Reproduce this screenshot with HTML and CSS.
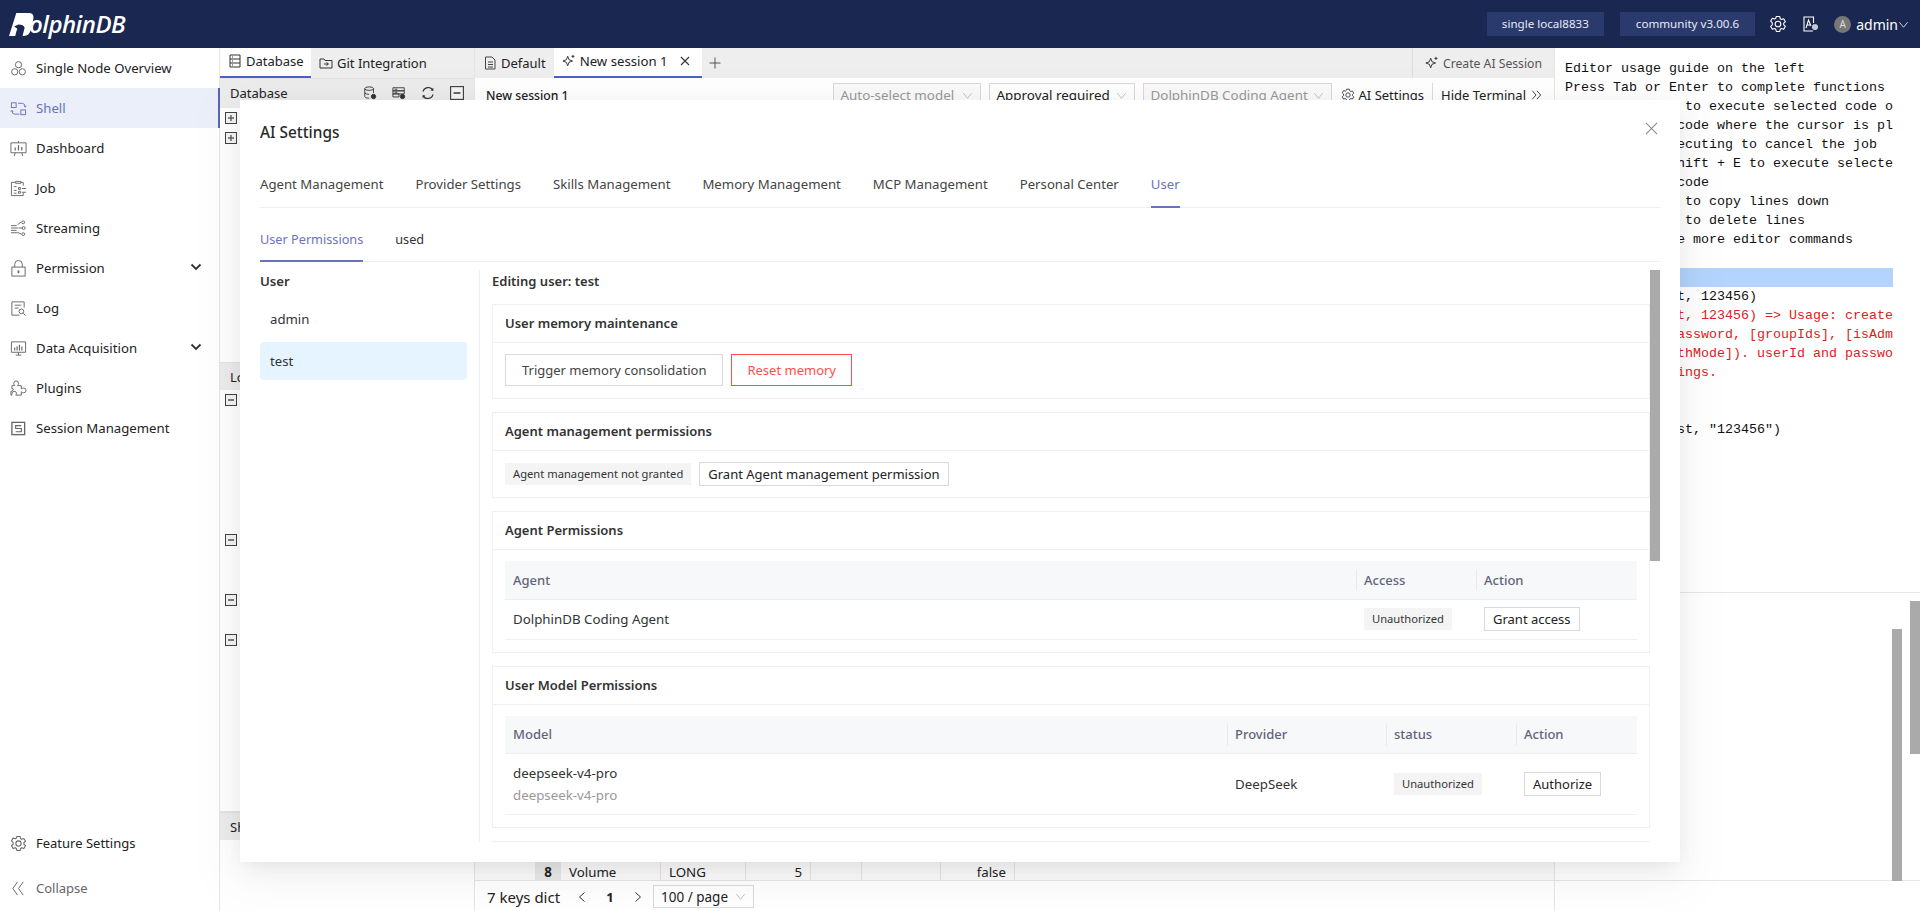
FILE: index.html
```html
<!DOCTYPE html>
<html lang="en">
<head>
<meta charset="utf-8">
<title>DolphinDB Shell</title>
<link rel="stylesheet" href="styles.css">
</head>
<body>
<svg class="defs" aria-hidden="true">
  <symbol id="gear" viewBox="0 0 18 18"><path d="M7.3 1.5h3.4l.5 2.2 1.3.8 2.2-.7 1.7 2.9-1.7 1.5v1.6l1.7 1.5-1.7 2.9-2.2-.7-1.3.8-.5 2.2H7.3l-.5-2.2-1.3-.8-2.2.7-1.7-2.9 1.7-1.5V7.7L1.6 6.2l1.7-2.9 2.2.7 1.3-.8z" fill="none" stroke="currentColor" stroke-width="1.1" stroke-linejoin="round"/><circle cx="9" cy="9" r="2.8" fill="none" stroke="currentColor" stroke-width="1.1"/></symbol>
  <symbol id="spark" viewBox="0 0 16 16"><path d="M6.5 2.5 8 6.5l4 1.5-4 1.5-1.500 4-1.500-4L1 8l4-1.500z" fill="none" stroke="currentColor" stroke-width="1.1" stroke-linejoin="round"/><path d="M12.500 1v3.500M10.800 2.700h3.400" stroke="currentColor" stroke-width="1.100"/></symbol>
  <symbol id="chev" viewBox="0 0 12 12"><path d="M1.500 3.500 6 9l4.500-5.500" fill="none" stroke="currentColor" stroke-width="1"/></symbol>
  <symbol id="plus" viewBox="0 0 12 12"><rect x=".5" y=".5" width="11" height="11" fill="#f4f4f4" stroke="#444"/><path d="M3 6h6M6 3v6" stroke="#666" stroke-width="1.500"/></symbol>
  <symbol id="minus" viewBox="0 0 12 12"><rect x=".5" y=".5" width="11" height="11" fill="#f4f4f4" stroke="#444"/><path d="M3 6h6" stroke="#555" stroke-width="1.500"/></symbol>
</svg>
<div class="app">
  <header class="topbar">
    <div class="logo">
      <svg class="logo-d" viewBox="0 0 24 24"><path d="M7 1h12q5 0 4.500 5L21 17q-1.500 6-7 6h-1l2-8q-1-3-6-3L5 14l3 2-1 3-1 4H0z" fill="#fff"/></svg>
      <span class="logo-text">olphinDB</span>
    </div>
    <div class="top-right">
      <span class="badge badge-first">single local8833</span>
      <span class="badge badge-last">community v3.00.6</span>
      <svg class="top-icon"><use href="#gear"/></svg>
      <svg class="top-icon" viewBox="0 0 18 18"><path d="M12 16H3V2h9.500v6M5 13l2.500-8 2.500 6M5.800 10h3.800" fill="none" stroke="currentColor" stroke-width="1.100"/><path d="M11 12h6M14 9.500v5.500M12 10h4v4h-4z" fill="none" stroke="currentColor"/></svg>
      <span class="avatar">A</span>
      <span class="user">admin</span>
      <svg class="user-chev"><use href="#chev"/></svg>
    </div>
  </header>
  <div class="main">
    <nav class="sidebar">
      <a class="nav-item"><svg class="nav-icon" viewBox="0 0 18 18"><g fill="none" stroke="currentColor"><circle cx="9" cy="5" r="3.300"/><circle cx="5" cy="12.500" r="3.300"/><circle cx="13" cy="12.500" r="3.300"/></g></svg>Single Node Overview</a>
      <a class="nav-item nav-active"><svg class="nav-icon" viewBox="0 0 18 18"><g fill="none" stroke="currentColor"><rect x="1.500" y="3" width="5" height="5"/><rect x="11.500" y="10.500" width="5" height="5"/><path d="M8.500 3.500h4.500q3 0 3 4M10 15H5q-3 0-3-4M15 6l1 1.500L17.500 6M.8 12.500 2 11l1.500 1.500"/></g></svg>Shell</a>
      <a class="nav-item"><svg class="nav-icon" viewBox="0 0 18 18"><g fill="none" stroke="currentColor"><path d="M1 3h16v10.500H1zM9 1v2M5.500 13.500 4.500 17M12.500 13.500l1 3.500"/><path d="M5.500 11V8M9 11V5.500M12.500 11V7.500" stroke-width="1.300"/></g></svg>Dashboard</a>
      <a class="nav-item"><svg class="nav-icon" viewBox="0 0 18 18"><g fill="none" stroke="currentColor"><path d="M6 2.500H1.500v14H14v-3M14 6V2.500h-2.500M6 1.500h5.500v2H6zM4 7h3M4 11h3M4 14h3"/><path d="M9 8h2v2H9zM9 12h2v2H9zM12.500 9H17M12.500 13H17"/></g></svg>Job</a>
      <a class="nav-item"><svg class="nav-icon" viewBox="0 0 18 18"><g fill="none" stroke="currentColor"><path d="M1 6h6M1 8.500h8M1 11h6M1 13.500h7M8 5l4-3M9.500 8.500H13M8 13l4 2"/><circle cx="14" cy="2.500" r="1.500"/><circle cx="14.500" cy="8.500" r="1.500"/><circle cx="14" cy="15" r="1.500"/></g></svg>Streaming</a>
      <a class="nav-item nav-sub"><svg class="nav-icon" viewBox="0 0 18 18"><g fill="none" stroke="currentColor"><rect x="2" y="7.500" width="14" height="9.500"/><path d="M5 7.500V4.500a4 4 0 0 1 8 0v3"/><path d="M9 11v3" stroke-width="1.800"/></g></svg><span class="nav-label">Permission</span><svg class="nav-caret" viewBox="0 0 12 12"><path d="M1.500 3.500 6 8l4.500-4.500" fill="none" stroke="currentColor" stroke-width="1.800"/></svg></a>
      <a class="nav-item"><svg class="nav-icon" viewBox="0 0 18 18"><g fill="none" stroke="currentColor"><path d="M15 8V2H2v14h8M5 5.500h7M5 8.500h4"/><circle cx="12" cy="12" r="2.500"/><path d="m14 14 2.500 2.500"/></g></svg>Log</a>
      <a class="nav-item nav-sub"><svg class="nav-icon" viewBox="0 0 18 18"><g fill="none" stroke="currentColor"><path d="M1.500 2h15v11h-15zM6 16h6M9 13v3"/><path d="M5 11V8M7.500 11V6.500M10 11V5M12.500 11V7" stroke-width="1.200"/></g></svg><span class="nav-label">Data Acquisition</span><svg class="nav-caret" viewBox="0 0 12 12"><path d="M1.500 3.500 6 8l4.500-4.500" fill="none" stroke="currentColor" stroke-width="1.800"/></svg></a>
      <a class="nav-item"><svg class="nav-icon" viewBox="0 0 18 18"><path d="M2 6h3q-1-1-1-2.500a2.500 2.500 0 0 1 5 0Q9 5 8 6h4v3.500q1-1 2.500-1a2.500 2.500 0 0 1 0 5q-1.500 0-2.500-1V16H6q1-1 1-1.500a2.500 2.500 0 0 0-5 0V16H1v-4q2 0 2.500-1.500T2 9z" fill="none" stroke="currentColor"/></svg>Plugins</a>
      <a class="nav-item"><svg class="nav-icon" viewBox="0 0 18 18"><rect x="2" y="2.500" width="13.500" height="13" fill="none" stroke="currentColor" stroke-width="1.400"/><path d="M12 6H6v3h6v3.500H6" fill="none" stroke="currentColor" stroke-width="1.200"/></svg>Session Management</a>
      <div class="nav-spacer"></div>
      <a class="nav-item nav-foot"><svg class="nav-icon"><use href="#gear"/></svg>Feature Settings</a>
      <a class="nav-collapse"><svg class="nav-icon" viewBox="0 0 18 18"><path d="M8 2 3 9l5 7M14 2 9 9l5 7" fill="none" stroke="currentColor"/></svg>Collapse</a>
    </nav>
    <section class="leftpanel">
      <div class="tabbar">
        <span class="ptab ptab-on"><svg class="tab-icon" viewBox="0 0 14 14"><path d="M2 1h10v12H2zM2 5h10M2 9h10M4 3h1M4 7h1M4 11h1" fill="none" stroke="#333"/></svg>Database</span>
        <span class="ptab"><svg class="tab-icon" viewBox="0 0 14 14"><path d="M1 3h4l1 1.500h7V12H1zM5 8h4M7.500 6.500 9.500 8l-2 1.500" fill="none" stroke="#333"/></svg>Git Integration</span>
      </div>
      <div class="phead phead-top">
        <span class="phead-label">Database</span>
        <svg class="ph-icon" viewBox="0 0 16 16"><g fill="none" stroke="#333"><ellipse cx="7" cy="3" rx="5" ry="2"/><path d="M2 3v9q0 2 5 2M12 3v5M2 7.500q0 2 5 2"/><circle cx="12" cy="12" r="2.500" fill="#333"/></g></svg>
        <svg class="ph-icon" viewBox="0 0 16 16"><g fill="none" stroke="#333"><path d="M1 2h13v3.500H1zM1 5.500h13V9H1zM1 9h7v3.500H1zM3 3.700h3M3 7.200h3"/><circle cx="12" cy="12" r="2.500" fill="#333"/></g></svg>
        <svg class="ph-icon" viewBox="0 0 16 16"><path d="M13.500 5A6 6 0 0 0 2.300 6.500M2.500 11A6 6 0 0 0 13.700 9.500" fill="none" stroke="#333" stroke-width="1.300"/><path d="m14 2 .2 3.500-3.200-.3zM2 14l-.2-3.500 3.200.3z" fill="#333"/></svg>
        <svg class="ph-icon"><use href="#minus"/></svg>
      </div>
      <div class="pane pane-a">
        <svg class="tree-box"><use href="#plus"/></svg>
        <svg class="tree-box"><use href="#plus"/></svg>
      </div>
      <div class="phead"><span class="phead-label">Local Variables</span></div>
      <div class="pane pane-b">
        <svg class="tree-box"><use href="#minus"/></svg>
        <svg class="tree-box gap-a"><use href="#minus"/></svg>
        <svg class="tree-box gap-b"><use href="#minus"/></svg>
        <svg class="tree-box gap-c"><use href="#minus"/></svg>
      </div>
      <div class="phead"><span class="phead-label">Shared Variables</span></div>
    </section>
    <section class="center">
      <div class="tabbar">
        <span class="etab"><svg class="tab-icon" viewBox="0 0 14 14"><path d="M2.500 1H9l3 3v9H2.500zM5 6h5M5 8.500h5M5 11h5" fill="none" stroke="#444"/></svg>Default</span>
        <span class="etab etab-on"><svg class="tab-icon"><use href="#spark"/></svg>New session 1<svg class="tab-close" viewBox="0 0 12 12"><path d="m2 2 8 8M10 2l-8 8" stroke="#333" stroke-width="1.100"/></svg></span>
        <svg class="tab-add" viewBox="0 0 12 12"><path d="M6 .5v11M.5 6h11" stroke="#555"/></svg>
        <span class="create-ai"><svg class="tab-icon"><use href="#spark"/></svg>Create AI Session</span>
      </div>
      <div class="toolbar">
        <span class="session-name">New session 1</span>
        <span class="select select-off select-a">Auto-select model<svg class="sel-chev"><use href="#chev"/></svg></span>
        <span class="select select-b">Approval required<svg class="sel-chev"><use href="#chev"/></svg></span>
        <span class="select select-off select-c">DolphinDB Coding Agent<svg class="sel-chev"><use href="#chev"/></svg></span>
        <span class="tool-link"><svg class="tab-icon"><use href="#gear"/></svg>AI Settings</span>
        <span class="tool-link tool-sep">Hide Terminal<svg class="dbl" viewBox="0 0 12 12"><path d="m1.500 1.500 4 4.500-4 4.500M6.500 1.500l4 4.500-4 4.500" fill="none" stroke="#333"/></svg></span>
      </div>
      <div class="center-fill"></div>
      <div class="dt-row">
        <span class="dt-idx">8</span>
        <span class="dt-cell dt-name">Volume</span>
        <span class="dt-cell dt-type">LONG</span>
        <span class="dt-cell dt-num">5</span>
        <span class="dt-cell dt-e1"></span>
        <span class="dt-cell dt-e2"></span>
        <span class="dt-cell dt-bool">false</span>
      </div>
      <div class="pager">
        <span class="pager-label">7 keys dict</span>
        <svg class="pager-arrow" viewBox="0 0 10 12"><path d="M7.500 1.500 2.500 6l5 4.500" fill="none" stroke="#333"/></svg>
        <b class="pager-num">1</b>
        <svg class="pager-arrow" viewBox="0 0 10 12"><path d="m2.500 1.500 5 4.500-5 4.500" fill="none" stroke="#333"/></svg>
        <span class="select pager-size">100 / page<svg class="sel-chev"><use href="#chev"/></svg></span>
      </div>
    </section>
    <aside class="terminal">
      <pre class="term-out">Editor usage guide on the left
Press Tab or Enter to complete functions
               to execute selected code o
              code where the cursor is pl
              ecuting to cancel the job
              hift + E to execute selecte
              code
               to copy lines down
               to delete lines
              e more editor commands

<span class="term-sel"> </span>
              t, 123456)
<span class="term-err">              t, 123456) =&gt; Usage: create
              assword, [groupIds], [isAdm
              thMode]). userId and passwo
              ings.</span>


              st, "123456")</pre>
      <div class="term-lower">
        <span class="bar bar-a"></span>
        <span class="bar bar-b"></span>
      </div>
      <div class="term-foot"></div>
    </aside>
  </div>
</div>

<div class="modal">
  <h2 class="modal-title">AI Settings</h2>
  <svg class="modal-close" viewBox="0 0 14 14"><path d="m1 1 12 12M13 1 1 13" stroke="#888" stroke-width="1.100"/></svg>
  <div class="mtabs">
    <span class="mtab">Agent Management</span>
    <span class="mtab">Provider Settings</span>
    <span class="mtab">Skills Management</span>
    <span class="mtab">Memory Management</span>
    <span class="mtab">MCP Management</span>
    <span class="mtab">Personal Center</span>
    <span class="mtab mtab-on">User</span>
  </div>
  <div class="stabs">
    <span class="stab stab-on">User Permissions</span>
    <span class="stab">used</span>
  </div>
  <div class="mbody">
    <div class="users">
      <div class="users-title">User</div>
      <div class="user-row">admin</div>
      <div class="user-row user-on">test</div>
    </div>
    <div class="editor">
      <div class="editor-scroll">
        <div class="editor-title">Editing user: test</div>
        <div class="card">
          <div class="card-head">User memory maintenance</div>
          <div class="card-body body-row">
            <button class="btn btn-lg">Trigger memory consolidation</button>
            <button class="btn btn-lg btn-danger">Reset memory</button>
          </div>
        </div>
        <div class="card">
          <div class="card-head">Agent management permissions</div>
          <div class="card-body body-row body-small">
            <span class="tag">Agent management not granted</span>
            <button class="btn">Grant Agent management permission</button>
          </div>
        </div>
        <div class="card">
          <div class="card-head">Agent Permissions</div>
          <div class="card-body">
            <table class="tbl tbl-agent">
              <thead><tr><th class="c-agent">Agent</th><th class="c-access">Access</th><th class="c-action-a">Action</th></tr></thead>
              <tbody><tr class="row-a"><td>DolphinDB Coding Agent</td><td><span class="tag">Unauthorized</span></td><td><button class="btn">Grant access</button></td></tr></tbody>
            </table>
          </div>
        </div>
        <div class="card">
          <div class="card-head">User Model Permissions</div>
          <div class="card-body">
            <table class="tbl tbl-model">
              <thead><tr><th class="c-model">Model</th><th class="c-provider">Provider</th><th class="c-status">status</th><th class="c-action-b">Action</th></tr></thead>
              <tbody><tr class="row-b"><td>deepseek-v4-pro<div class="muted">deepseek-v4-pro</div></td><td>DeepSeek</td><td><span class="tag">Unauthorized</span></td><td><button class="btn">Authorize</button></td></tr></tbody>
            </table>
          </div>
        </div>
        <div class="card card-next"></div>
      </div>
      <div class="m-scroll"><span class="m-thumb"></span></div>
    </div>
  </div>
</div>
</body>
</html>
```
FILE: styles.css
```css
* { box-sizing: border-box; }
html, body { margin: 0; height: 911px; overflow: hidden; }
body { font-family: "Noto Sans", "Open Sans", sans-serif; font-size: 14px; color: #222; background: #fff; position: relative; }
.defs { position: absolute; width: 0; height: 0; }
.app { display: flex; flex-direction: column; height: 911px; }

.topbar { height: 48px; flex: none; background: #1a2750; display: flex; align-items: center; justify-content: space-between; }
.logo { display: flex; align-items: center; padding-left: 9px; color: #fff; }
.logo-d { width: 25px; height: 25px; flex: none; }
.logo-text { font: italic 600 24px/28px "Open Sans", sans-serif; margin-left: -5px; letter-spacing: -.5px; }
.top-right { display: flex; align-items: center; color: #fff; padding-right: 11px; font-size: 13px; }
.badge { height: 24px; line-height: 24px; padding: 0 16px; background: #2a3a6d; margin-right: 16px; font-size: 11.600px; color: #e8ecf6; }
.badge-first { padding: 0 15px; }
.badge-last { margin-right: 7px; }
.top-icon { width: 18px; height: 18px; margin-left: 7px; margin-right: 7px; color: #fff; }
.avatar { width: 17px; height: 17px; border-radius: 50%; background: #777; color: #ddd; font-size: 10px; line-height: 17px; text-align: center; margin-left: 8px; }
.user { margin-left: 5px; font-size: 14px; }
.user-chev { width: 11px; height: 11px; margin-left: 0; color: #dde; }

.main { flex: 1; display: flex; min-height: 0; }
.sidebar { width: 220px; flex: none; border-right: 1px solid #e6e6e6; display: flex; flex-direction: column; }
.nav-item { height: 40px; display: flex; align-items: center; padding-left: 10px; color: #222; font-size: 13.200px; }
.nav-icon { width: 17px; height: 17px; margin-right: 9px; flex: none; color: #666; }
.nav-active { background: #ebeffa; color: #6a72c0; border-right: 2px solid #5b63b5; margin-right: -1px; }
.nav-active .nav-icon { color: #6a72c0; }
.nav-label { flex: 1; }
.nav-caret { width: 12px; height: 12px; margin-right: 17px; margin-bottom: 3px; color: #333; }
.nav-spacer { flex: 1; }
.nav-foot { height: 30px; margin-bottom: 15px; font-size: 13px; }
.nav-collapse { height: 30px; margin-bottom: 8px; display: flex; align-items: center; padding-left: 10px; color: #666; font-size: 13px; }

.leftpanel { width: 255px; flex: none; border-right: 1px solid #e6e6e6; display: flex; flex-direction: column; }
.tabbar { height: 30px; flex: none; background: #eee; display: flex; align-items: center; }
.ptab { height: 30px; display: flex; align-items: center; padding: 0 8px; font-size: 13px; white-space: nowrap; }
.ptab-on { background: #fff; border-bottom: 2px solid #4f5fc9; width: 91px; padding-bottom: 2px; }
.tab-icon { width: 14px; height: 14px; margin-right: 4px; flex: none; color: #333; }
.phead { height: 28px; flex: none; background: #ececec; border-top: 1px solid #e4e4e4; display: flex; align-items: center; padding: 0 10px; font-size: 13px; }
.phead-top { height: 30px; padding-bottom: 2px; }
.phead-label { flex: 1; white-space: nowrap; overflow: hidden; }
.ph-icon { width: 14px; height: 14px; margin-left: 15px; }
.pane { flex: none; display: flex; flex-direction: column; align-items: flex-start; padding-left: 5px; }
.pane-a { height: 254px; padding-top: 4px; }
.pane-b { height: 422px; padding-top: 4px; border-bottom: 1px solid #e4e4e4; }
.tree-box { width: 12px; height: 12px; margin-bottom: 8px; flex: none; }
.gap-a { margin-top: 120px; }
.gap-b { margin-top: 40px; }
.gap-c { margin-top: 20px; }

.center { width: 1080px; flex: none; display: flex; flex-direction: column; border-right: 1px solid #e6e6e6; }
.etab { height: 30px; display: flex; align-items: center; padding: 0 8px; font-size: 13px; white-space: nowrap; }
.etab-on { background: #fff; border-bottom: 2px solid #4f5fc9; padding: 0 8px 2px 8px; width: 148px; font-size: 13.200px; }
.tab-close { width: 12px; height: 12px; margin-left: 11px; }
.tab-add { width: 12px; height: 12px; margin-left: 7px; }
.create-ai { margin-left: auto; height: 30px; display: flex; align-items: center; border-left: 1px solid #ddd; padding: 0 12px; font-size: 12.200px; color: #555; }
.toolbar { height: 40px; flex: none; display: flex; align-items: flex-start; padding: 5px 12px 0 11px; font-size: 13px; }
.session-name { flex: 1; font-size: 12.200px; padding-top: 4px; font-weight: 500; }
.select { height: 24px; border: 1px solid #d9d9d9; padding: 0 7px; display: flex; align-items: center; justify-content: space-between; white-space: nowrap; font-size: 13.400px; margin-right: 8px; }
.select-off { color: #999; background: #fafafa; }
.select-a { width: 148px; }
.select-b { width: 146px; }
.select-c { width: 189px; margin-right: 9px; }
.sel-chev { width: 11px; height: 11px; color: #bbb; flex: none; }
.tool-link { display: flex; align-items: center; height: 24px; font-size: 13px; white-space: nowrap; }
.tool-sep { border-left: 1px solid #ddd; margin-left: 8px; padding-left: 8px; }
.dbl { width: 11px; height: 12px; margin-left: 5px; }
.center-fill { flex: 1; }
.dt-row { height: 19px; flex: none; display: flex; border-bottom: 1px solid #e6e6e6; font-size: 13.300px; line-height: 20px; background: #fafafa; padding-left: 60px; }
.dt-idx { width: 26px; background: #e8e8e8; text-align: center; font-weight: 700; }
.dt-cell { padding: 0 8px; border-right: 1px solid #e4e4e4; }
.dt-name { width: 100px; }
.dt-type { width: 85px; }
.dt-num { width: 65px; text-align: right; }
.dt-e1 { width: 51px; }
.dt-e2 { width: 79px; }
.dt-bool { width: 74px; text-align: right; }
.pager { height: 30px; flex: none; display: flex; align-items: center; padding-left: 12px; padding-top: 1px; }
.pager-label { width: 90px; font-size: 15px; white-space: nowrap; }
.pager-arrow { width: 10px; height: 12px; }
.pager-num { width: 46px; text-align: center; font-size: 13px; }
.pager-size { width: 101px; margin-left: 10px; height: 23px; font-size: 13.500px; }

.terminal { flex: 1; display: flex; flex-direction: column; min-width: 0; }
.term-out { margin: 0; height: 545px; flex: none; padding: 11px 27px 0 10px; overflow: hidden; font: 13.330px/19px "Liberation Mono", monospace; color: #111; border-bottom: 1px solid #e6e6e6; }
.term-sel { display: block; height: 19px; margin-bottom: -19px; background: #b3d4fc; }
.term-err { color: #e02020; }
.term-lower { height: 288px; flex: none; display: flex; justify-content: flex-end; align-items: flex-start; border-bottom: 1px solid #e6e6e6; }
.term-foot { height: 30px; flex: none; }
.bar { width: 10px; background: #aaa; flex: none; }
.bar-a { height: 252px; margin-top: 36px; margin-right: 8px; }
.bar-b { height: 153px; margin-top: 8px; }

.modal { position: absolute; left: 240px; top: 100px; width: 1440px; height: 762px; background: #fff; padding: 21px 20px 0; box-shadow: 0 12px 48px 16px rgba(0,0,0,.03), 0 9px 28px 0 rgba(0,0,0,.05), 0 6px 16px -8px rgba(0,0,0,.08); }
.modal-title { margin: 0; font-size: 15.400px; font-weight: 500; line-height: 24px; color: #2a2a2a; }
.modal-close { position: absolute; right: 22px; top: 22px; width: 13px; height: 13px; }
.mtabs { display: flex; gap: 32px; height: 45px; margin-top: 18px; border-bottom: 1px solid #eee; align-items: stretch; }
.mtab { line-height: 43px; font-size: 13.200px; color: #444; }
.mtab-on { color: #6b72bd; border-bottom: 2px solid #6b72bd; height: 45px; }
.stabs { display: flex; gap: 32px; height: 54px; border-bottom: 1px solid #eee; padding-top: 20px; }
.stab { line-height: 22px; font-size: 12.700px; color: #333; height: 34px; }
.stab-on { color: #6b72bd; border-bottom: 2px solid #6b72bd; }
.mbody { display: flex; height: 580px; padding-top: 8px; }
.users { width: 220px; flex: none; border-right: 1px solid #eee; padding-right: 12px; }
.users-title { font-weight: 600; font-size: 13.200px; line-height: 22px; color: #333; margin-bottom: 8px; }
.user-row { height: 38px; line-height: 38px; padding-left: 10px; border-radius: 4px; margin-bottom: 4px; color: #333; font-size: 13.200px; }
.user-on { background: #e6f4ff; }
.editor { flex: 1; display: flex; padding-left: 12px; min-width: 0; }
.editor-scroll { width: 1158px; flex: none; overflow: hidden; }
.editor-title { font-weight: 600; font-size: 13px; line-height: 22px; color: #333; margin-bottom: 12px; }
.m-scroll { width: 10px; flex: none; }
.m-thumb { display: block; height: 291px; background: #aaa; }
.card { border: 1px solid #f0f0f0; margin-bottom: 13px; }
.card-next { height: 60px; }
.card-head { height: 38px; line-height: 36px; border-bottom: 1px solid #f0f0f0; padding: 0 12px; font-weight: 600; font-size: 13px; color: #333; }
.card-body { padding: 11px 12px 12px; }
.body-row { display: flex; align-items: center; gap: 8px; }
.body-small { padding-bottom: 11px; height: 46px; }
.btn { height: 24px; padding: 0 8px; background: #fff; border: 1px solid #d9d9d9; font: 13px/22px "Noto Sans", sans-serif; color: #222; white-space: nowrap; }
.btn-lg { height: 32px; padding: 0 16px; color: #444; }
.btn-danger { color: #ff4d4f; border-color: #ff4d4f; padding: 0 15px; }
.tag { display: inline-block; height: 22px; line-height: 22px; padding: 0 8px; background: #f4f4f4; font-size: 11.200px; color: #333; white-space: nowrap; }
.tbl { width: 1132px; border-collapse: collapse; table-layout: fixed; font-size: 13.300px; }
.tbl th { height: 38px; background: #f7f8fa; text-align: left; padding: 0 8px; font-weight: 500; font-size: 13px; color: #5f6578; position: relative; border-bottom: 1px solid #eee; }
.tbl th + th::before { content: ""; position: absolute; left: 0; top: 8px; height: 22px; width: 1px; background: #e8e8ee; }
.tbl td { padding: 0 8px; border-bottom: 1px solid #f0f0f0; color: #333; vertical-align: middle; }
.row-a { height: 40px; }
.row-b { height: 61px; }
.muted { color: #999; margin-top: 4px; }
.c-agent { width: 851px; }
.c-access { width: 120px; }
.c-action-a { width: 161px; }
.c-model { width: 722px; }
.c-provider { width: 159px; }
.c-status { width: 130px; }
.c-action-b { width: 121px; }
```
